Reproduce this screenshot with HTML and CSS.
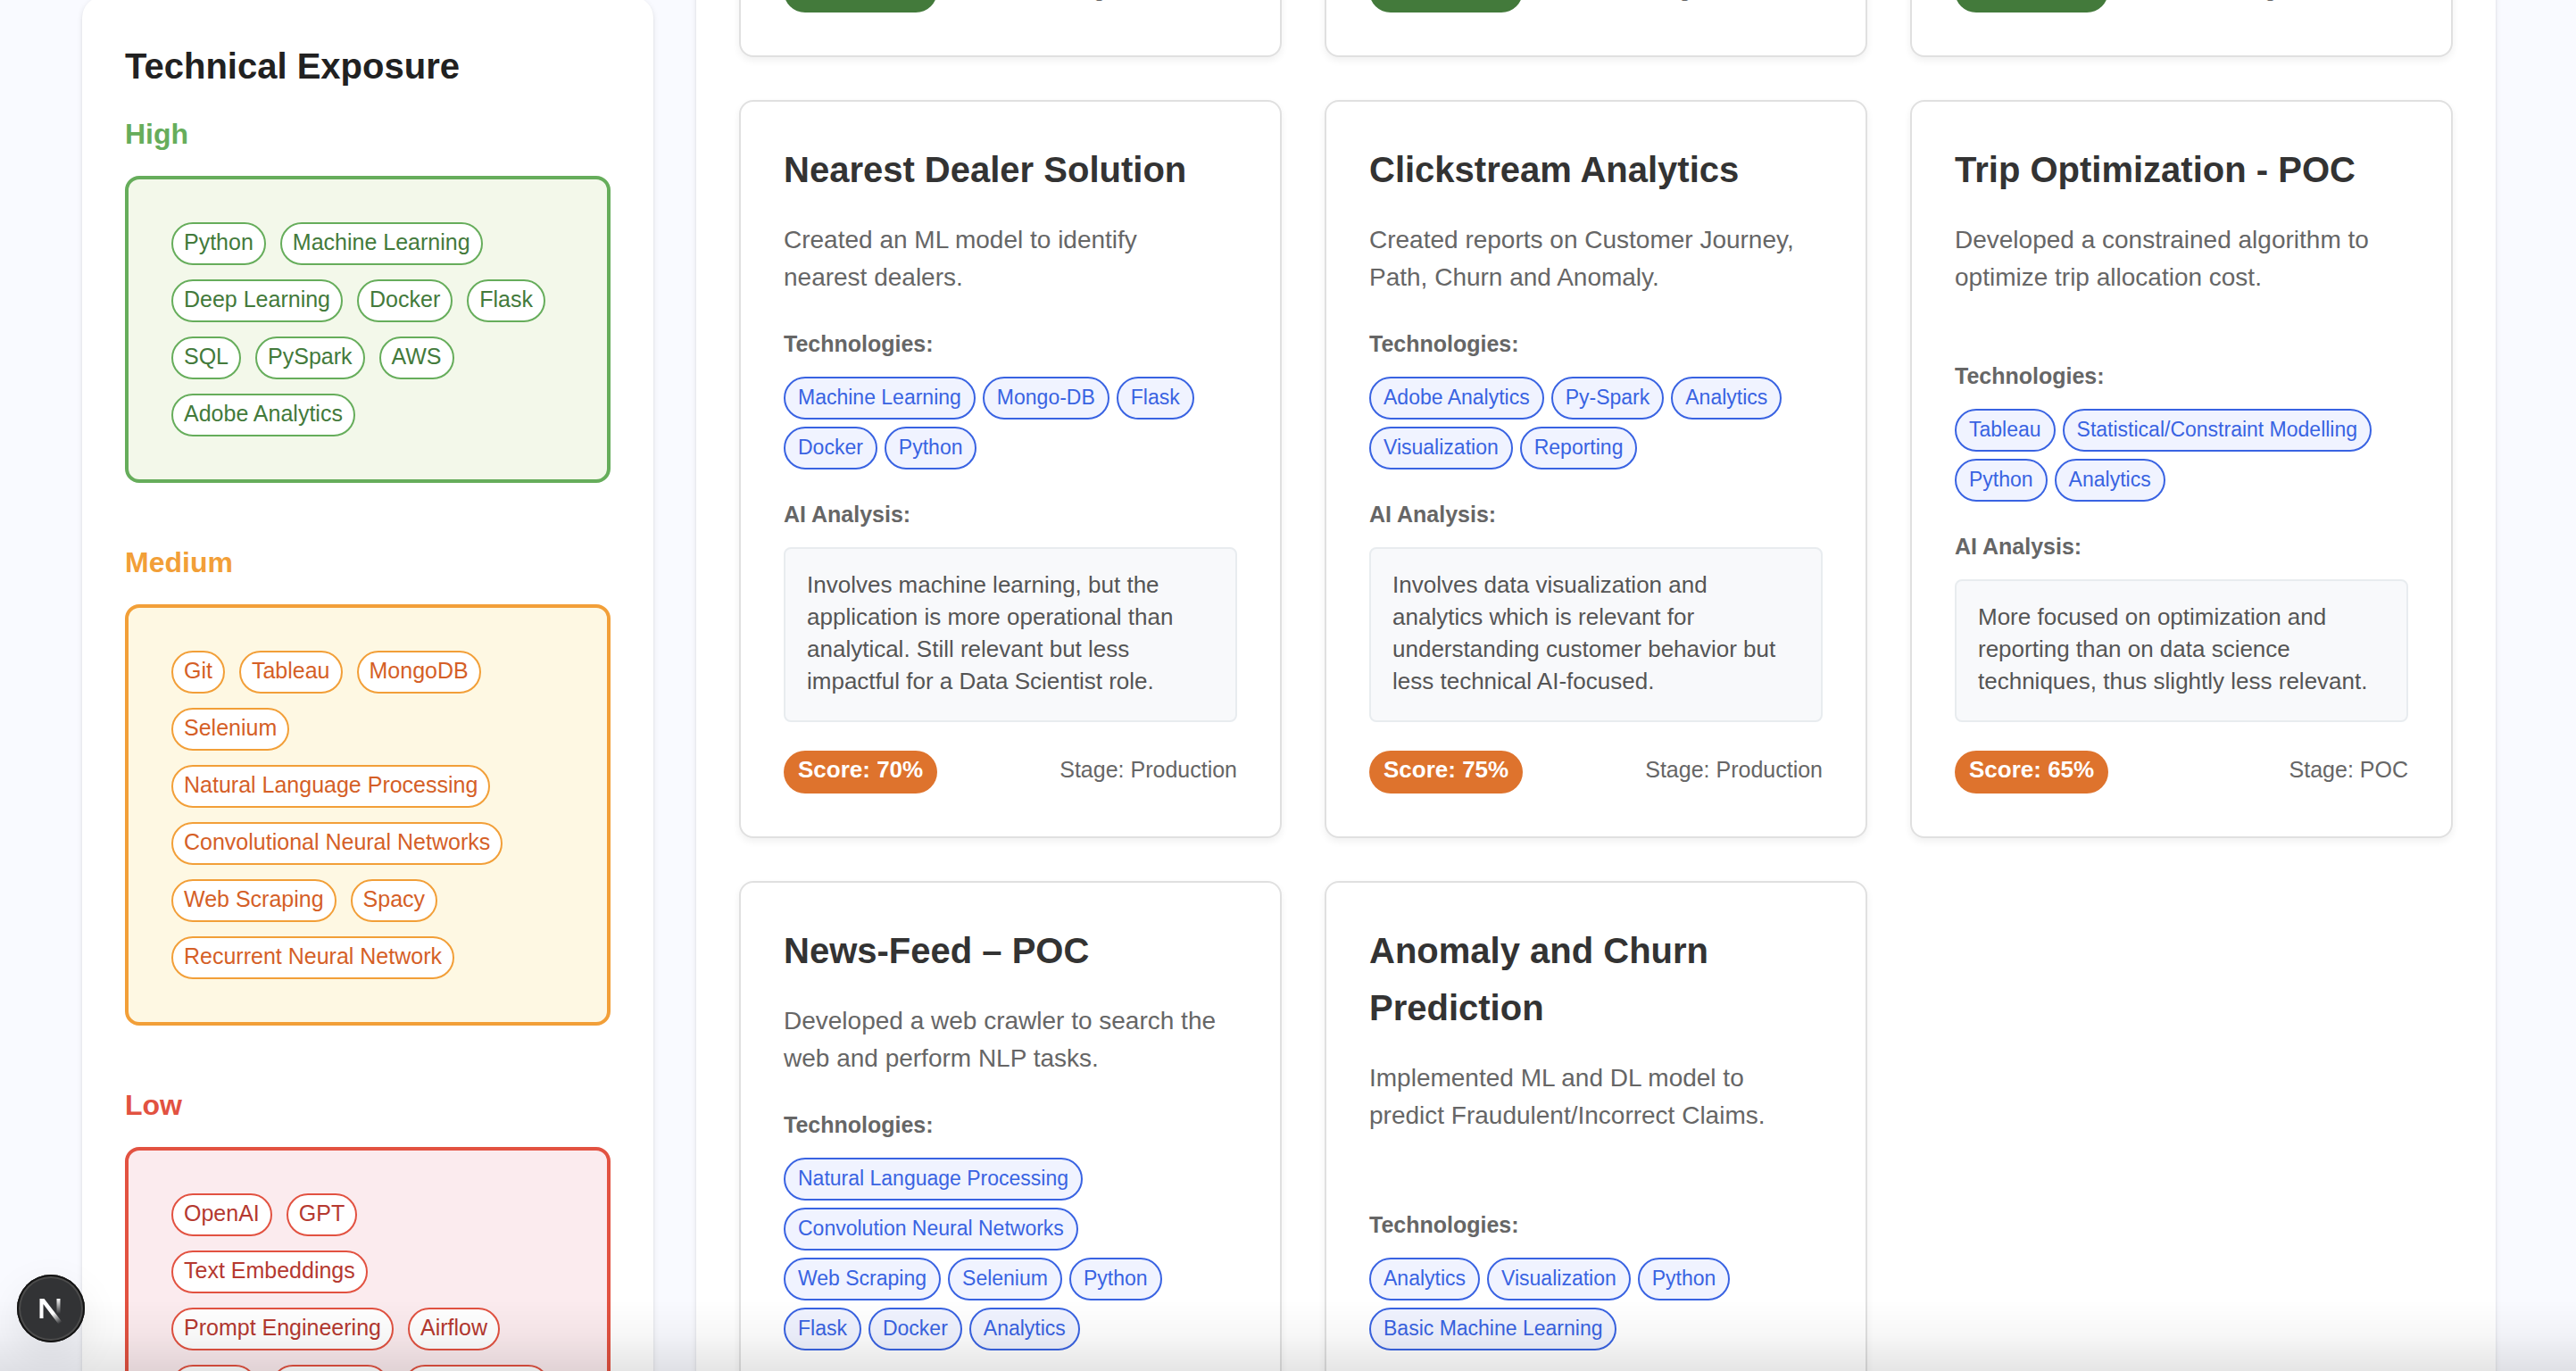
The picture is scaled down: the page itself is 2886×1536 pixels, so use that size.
FILE: index.html
```html
<!DOCTYPE html>
<html lang="en">
<head>
<meta charset="utf-8">
<title>Technical Exposure and Projects</title>
<meta name="viewport" content="width=device-width, initial-scale=1">
<link rel="stylesheet" href="styles.css">
</head>
<body>
<div class="viewport">
  <div class="layout">
    <aside class="panel sidebar">
      <h2 class="sidebar-title">Technical Exposure</h2>
      <section class="level level-high">
        <h3 class="level-name">High</h3>
        <ul class="level-box">
          <li class="skill">Python</li>
          <li class="skill">Machine Learning</li>
          <li class="skill">Deep Learning</li>
          <li class="skill">Docker</li>
          <li class="skill">Flask</li>
          <li class="skill">SQL</li>
          <li class="skill">PySpark</li>
          <li class="skill">AWS</li>
          <li class="skill">Adobe Analytics</li>
        </ul>
      </section>
      <section class="level level-medium">
        <h3 class="level-name">Medium</h3>
        <ul class="level-box">
          <li class="skill">Git</li>
          <li class="skill">Tableau</li>
          <li class="skill">MongoDB</li>
          <li class="skill">Selenium</li>
          <li class="skill">Natural Language Processing</li>
          <li class="skill">Convolutional Neural Networks</li>
          <li class="skill">Web Scraping</li>
          <li class="skill">Spacy</li>
          <li class="skill">Recurrent Neural Network</li>
        </ul>
      </section>
      <section class="level level-low">
        <h3 class="level-name">Low</h3>
        <ul class="level-box">
          <li class="skill">OpenAI</li>
          <li class="skill">GPT</li>
          <li class="skill">Text Embeddings</li>
          <li class="skill">Prompt Engineering</li>
          <li class="skill">Airflow</li>
          <li class="skill">CI/CD</li>
          <li class="skill">Pinecone</li>
          <li class="skill">Transformer</li>
        </ul>
      </section>
    </aside>

    <main class="panel projects">
      <article class="card">
        <footer class="card-footer"><span class="score score-high">Score: 85%</span><span class="stage">Stage: Production</span></footer>
      </article>
      <article class="card">
        <footer class="card-footer"><span class="score score-high">Score: 85%</span><span class="stage">Stage: Production</span></footer>
      </article>
      <article class="card">
        <footer class="card-footer"><span class="score score-high">Score: 85%</span><span class="stage">Stage: Production</span></footer>
      </article>

      <article class="card">
        <h3 class="card-title">Nearest Dealer Solution</h3>
        <p class="card-text">Created an ML model to identify nearest dealers.</p>
        <h4 class="label">Technologies:</h4>
        <ul class="tags">
          <li class="tag">Machine Learning</li>
          <li class="tag">Mongo-DB</li>
          <li class="tag">Flask</li>
          <li class="tag">Docker</li>
          <li class="tag">Python</li>
        </ul>
        <h4 class="label">AI Analysis:</h4>
        <p class="analysis">Involves machine learning, but the application is more operational than analytical. Still relevant but less impactful for a Data Scientist role.</p>
        <footer class="card-footer"><span class="score">Score: 70%</span><span class="stage">Stage: Production</span></footer>
      </article>

      <article class="card">
        <h3 class="card-title">Clickstream Analytics</h3>
        <p class="card-text">Created reports on Customer Journey, Path, Churn and Anomaly.</p>
        <h4 class="label">Technologies:</h4>
        <ul class="tags">
          <li class="tag">Adobe Analytics</li>
          <li class="tag">Py-Spark</li>
          <li class="tag">Analytics</li>
          <li class="tag">Visualization</li>
          <li class="tag">Reporting</li>
        </ul>
        <h4 class="label">AI Analysis:</h4>
        <p class="analysis">Involves data visualization and analytics which is relevant for understanding customer behavior but less technical AI-focused.</p>
        <footer class="card-footer"><span class="score">Score: 75%</span><span class="stage">Stage: Production</span></footer>
      </article>

      <article class="card">
        <h3 class="card-title">Trip Optimization - POC</h3>
        <p class="card-text">Developed a constrained algorithm to optimize trip allocation cost.</p>
        <h4 class="label">Technologies:</h4>
        <ul class="tags">
          <li class="tag">Tableau</li>
          <li class="tag">Statistical/Constraint Modelling</li>
          <li class="tag">Python</li>
          <li class="tag">Analytics</li>
        </ul>
        <h4 class="label">AI Analysis:</h4>
        <p class="analysis">More focused on optimization and reporting than on data science techniques, thus slightly less relevant.</p>
        <footer class="card-footer"><span class="score">Score: 65%</span><span class="stage">Stage: POC</span></footer>
      </article>

      <article class="card">
        <h3 class="card-title">News-Feed – POC</h3>
        <p class="card-text">Developed a web crawler to search the web and perform NLP tasks.</p>
        <h4 class="label">Technologies:</h4>
        <ul class="tags">
          <li class="tag">Natural Language Processing</li>
          <li class="tag">Convolution Neural Networks</li>
          <li class="tag">Web Scraping</li>
          <li class="tag">Selenium</li>
          <li class="tag">Python</li>
          <li class="tag">Flask</li>
          <li class="tag">Docker</li>
          <li class="tag">Analytics</li>
        </ul>
        <h4 class="label">AI Analysis:</h4>
      </article>

      <article class="card">
        <h3 class="card-title">Anomaly and Churn Prediction</h3>
        <p class="card-text">Implemented ML and DL model to predict Fraudulent/Incorrect Claims.</p>
        <h4 class="label">Technologies:</h4>
        <ul class="tags">
          <li class="tag">Analytics</li>
          <li class="tag">Visualization</li>
          <li class="tag">Python</li>
          <li class="tag">Basic Machine Learning</li>
        </ul>
        <h4 class="label">AI Analysis:</h4>
      </article>
    </main>
  </div>
  <div class="bottom-shade"></div>
  <button class="dev-button" type="button" aria-label="Open developer tools">
    <svg viewBox="0 0 76 76" aria-hidden="true">
      <defs>
        <linearGradient id="diagonal" gradientUnits="userSpaceOnUse" x1="41" y1="43" x2="49" y2="54">
          <stop offset="0" stop-color="#fff"/><stop offset="1" stop-color="#fff" stop-opacity="0"/>
        </linearGradient>
        <linearGradient id="stem" gradientUnits="userSpaceOnUse" x1="0" y1="27" x2="0" y2="44">
          <stop offset="0" stop-color="#fff"/><stop offset="1" stop-color="#fff" stop-opacity="0"/>
        </linearGradient>
      </defs>
      <path d="M25.500 27H30.500L50.500 53L46.500 55.500L29.500 33V49H25.500Z" fill="url(#diagonal)"/>
      <rect x="44.500" y="27" width="4" height="17" fill="url(#stem)"/>
    </svg>
  </button>
</div>
</body>
</html>
```
FILE: styles.css
```css
* {
  box-sizing: border-box;
}

body {
  margin: 0;
  background: #f9faff;
  font-family: "Liberation Sans", Arial, sans-serif;
  color: #212121;
}

h2, h3, h4, p, ul {
  margin: 0;
  padding: 0;
}

ul {
  list-style: none;
}

.viewport {
  height: 100vh;
  overflow: hidden;
}

.layout {
  display: grid;
  grid-template-columns: 640fr 2016fr;
  gap: 48px;
  align-items: start;
  margin-top: -132px;
  padding: 0 90px 0 92px;
}

.panel {
  background: #fff;
  border-radius: 24px;
  box-shadow:
    0 4px 2px -2px rgba(0, 0, 0, 0.1),
    0 2px 2px rgba(0, 0, 0, 0.08),
    0 2px 6px rgba(0, 0, 0, 0.1);
}

/* Sidebar */
.sidebar {
  margin-top: 128px;
  padding: 46px 48px;
}

.sidebar-title {
  margin-bottom: 18px;
  font-size: 40px;
  line-height: 64px;
}

.level {
  margin-bottom: 63px;
}

.level-name {
  margin-bottom: 21px;
  font-size: 32px;
  line-height: 52px;
}

.level-box {
  display: flex;
  flex-wrap: wrap;
  gap: 16px;
  padding: 48px;
  border: 4px solid;
  border-radius: 16px;
}

.skill {
  height: 48px;
  padding: 0 12px;
  border: 2px solid;
  border-radius: 24px;
  background: #fff;
  font-size: 25px;
  line-height: 40px;
}

.level-high .level-name { color: #66ad5b; }
.level-high .level-box { border-color: #66ad5b; background: #f3f8ea; }
.level-high .skill { border-color: #66ad5b; color: #437a3b; }

.level-medium .level-name { color: #f29f38; }
.level-medium .level-box { border-color: #f29f38; background: #fef8e3; }
.level-medium .skill { border-color: #f29f38; color: #d55f27; }

.level-low .level-name { color: #e25241; }
.level-low .level-box { border-color: #e25241; background: #fbebee; }
.level-low .skill { border-color: #e25241; color: #b53930; }

/* Project cards */
.projects {
  display: grid;
  grid-template-columns: repeat(3, 1fr);
  gap: 48px;
  padding: 48px;
}

.card {
  display: flex;
  flex-direction: column;
  padding: 48px;
  border: 2px solid #e0e0e0;
  border-radius: 16px;
  background: #fff;
  box-shadow: 0 4px 8px rgba(0, 0, 0, 0.06);
}

.card-title {
  margin: -4px 0 26px;
  color: #333;
  font-size: 40px;
  line-height: 64px;
}

.card-text {
  flex-grow: 1;
  padding: 0 16px 3px 0;
  color: #666;
  font-size: 28px;
  line-height: 42px;
}

.label {
  margin: 30px 0 17px;
  color: #666;
  font-size: 25px;
  line-height: 40px;
}

.tags {
  display: flex;
  flex-wrap: wrap;
  gap: 8px;
}

.tag {
  height: 48px;
  padding: 0 14px;
  border: 2px solid #3963e2;
  border-radius: 24px;
  background: #f0f3ff;
  color: #3963e2;
  font-size: 23px;
  line-height: 42px;
}

.analysis {
  margin-bottom: 32px;
  padding: 22px 24px 26px;
  border: 2px solid #e8ecef;
  border-radius: 8px;
  background: #f8f9fb;
  color: #555;
  font-size: 26px;
  line-height: 36px;
}

.card-footer {
  display: flex;
  align-items: flex-start;
  justify-content: space-between;
}

.score {
  height: 48px;
  padding: 0 16px;
  border-radius: 24px;
  background: #de732d;
  color: #fff;
  font-size: 26px;
  font-weight: 700;
  line-height: 42px;
}

.score-high {
  background: #437a3b;
}

.stage {
  color: #666;
  font-size: 25px;
  line-height: 42px;
}

/* Fixed overlays */
.bottom-shade {
  position: fixed;
  right: 0;
  bottom: 0;
  left: 0;
  height: 80px;
  background: linear-gradient(rgba(0, 0, 0, 0), rgba(0, 0, 0, 0.03) 50%, rgba(0, 0, 0, 0.1));
  pointer-events: none;
}

.dev-button {
  position: fixed;
  bottom: 32px;
  left: 19px;
  width: 76px;
  height: 76px;
  padding: 0;
  border: 0;
  border-radius: 50%;
  background: #323335;
  box-shadow: inset 0 0 0 2px #141414, inset 0 0 0 4px #4b4b4b, 0 16px 48px rgba(0, 0, 0, 0.08);
}

.dev-button svg {
  display: block;
  width: 76px;
  height: 76px;
}
```
